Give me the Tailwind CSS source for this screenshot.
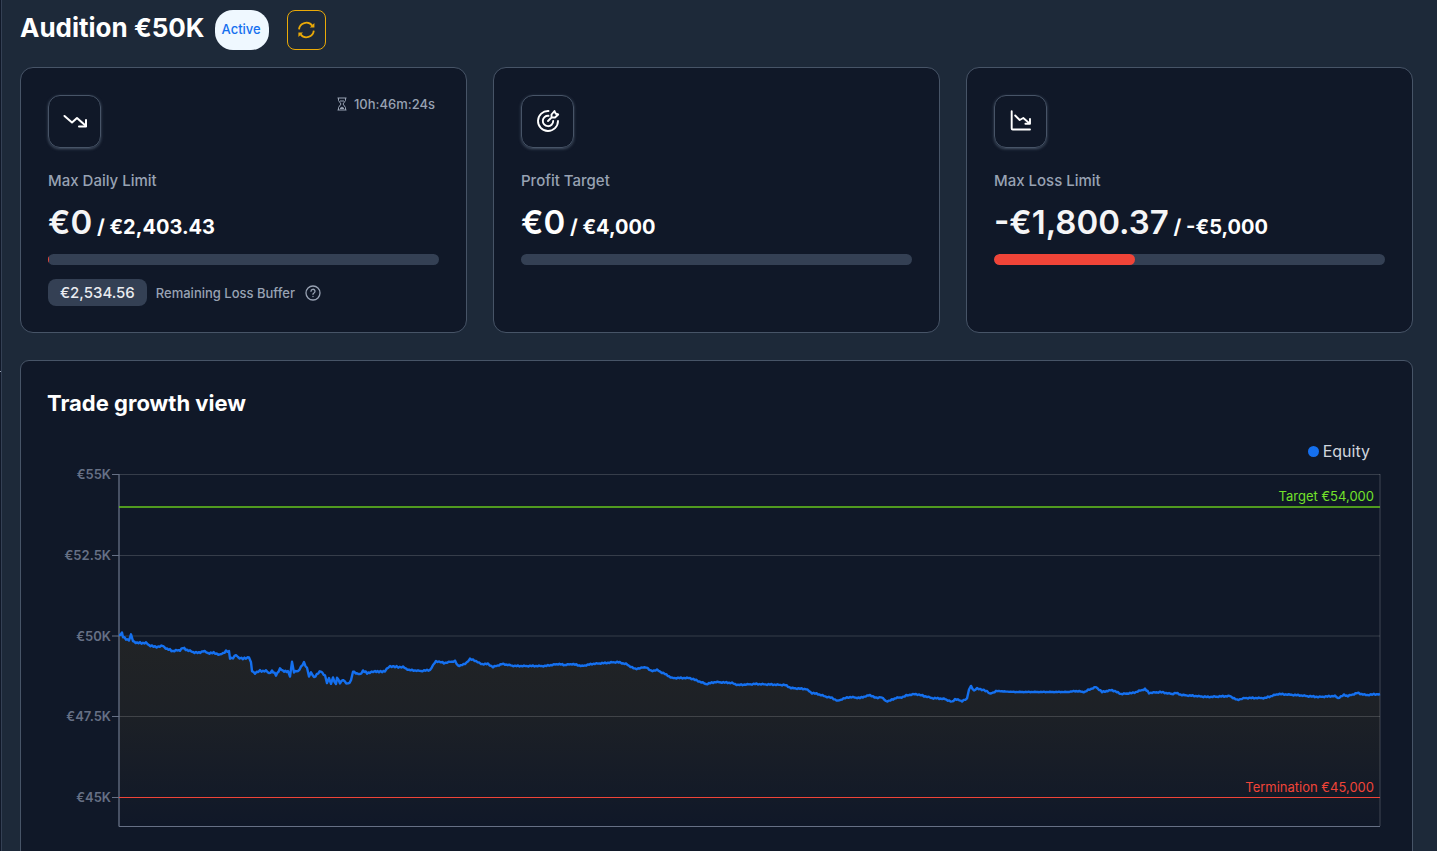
<!DOCTYPE html>
<html lang="en">
<head>
  <meta charset="UTF-8" />
  <meta name="viewport" content="width=device-width, initial-scale=1" />
  <title>Audition €50K</title>
  <script src="https://cdn.jsdelivr.net/npm/@tailwindcss/browser@4"></script>
</head>
<body class="h-screen overflow-hidden bg-[#1d2939] font-['Inter',sans-serif] text-white">
  <div class="flex min-h-screen">

    <!-- Collapsed sidebar edge -->
    <aside class="w-[2px] shrink-0 border-r border-[#344054] bg-[#101828] pt-[371px]">
      <div class="h-px bg-[#98a2b3]"></div>
    </aside>

    <main class="min-w-0 grow pt-[10px] pr-6 pl-[18px]">

      <!-- Header -->
      <header class="mb-[17px] flex items-start">
        <h1 class="text-[26px] leading-9 font-bold">Audition €50K</h1>
        <span class="ml-[10px] flex h-10 items-center rounded-[18px] bg-[#eff8ff] pr-2 pl-[7px] text-[13px] font-medium text-[#1570ef]">Active</span>
        <button type="button" aria-label="Refresh" class="ml-[18px] flex h-10 w-[39px] items-center justify-center rounded-lg border border-[#eaaa08] text-[#eaaa08]">
          <svg class="size-5" viewBox="0 0 20 20" fill="none" stroke="currentColor" stroke-width="1.8">
            <path d="M3 9.400a7.400 7.400 0 0 1 13.200-3.800M17.800 10.600a7.400 7.400 0 0 1-13.200 3.800" />
            <path d="M18.400 3v4.600h-4.600zM2.400 17v-4.600h4.600z" fill="currentColor" stroke="none" />
          </svg>
        </button>
      </header>

      <!-- Limits -->
      <div class="mb-[27px] grid grid-cols-3 gap-[26px]">

        <section class="rounded-[13px] border border-[#475467] bg-[#101828] px-[27px] pt-[27px] pb-[26px]">
          <div class="flex items-start justify-between">
            <div class="flex size-[53px] items-center justify-center rounded-xl border border-[#475467] pb-px shadow-[0_1px_3px_#475467]">
              <svg class="size-6" viewBox="0 0 24 24" fill="none" stroke="currentColor" stroke-width="2" stroke-linecap="round" stroke-linejoin="round">
                <path d="m23 17-9-8-5 4.500L1.500 7" />
                <path d="M16 17.500h7V11" />
              </svg>
            </div>
            <div class="flex items-center gap-[6px] pr-1 text-[13px] leading-[18px] font-medium text-[#98a2b3]">
              <svg class="h-[14px] w-3" viewBox="0 0 12 14" fill="none" stroke="currentColor" stroke-width="1">
                <path d="M1.500 1h9M1.500 13h9M2.500 1v2.500L5 7l-2.500 3.500V13M9.500 1v2.500L7 7l2.500 3.500V13M4 4h4M4 11.500 6 10l2 1.500z" />
              </svg>
              10h:46m:24s
            </div>
          </div>
          <h2 class="mt-[21px] text-[15px] leading-6 font-medium text-[#98a2b3]">Max Daily Limit</h2>
          <p class="mt-[9px] text-[33px] leading-10 font-semibold text-[#f5f5f6]">€0<span class="text-xl font-bold text-white"> / €2,403.43</span></p>
          <div class="mt-3 h-[11px] overflow-hidden rounded-full bg-[#344054]">
            <div class="h-full bg-[#f04438]" style="width: 0.1%"></div>
          </div>
          <div class="mt-[14px] flex items-center">
            <span class="rounded-lg bg-[#344054] px-3 text-[15px] leading-[27px] font-medium text-[#eaecf0]">€2,534.56</span>
            <span class="ml-[9px] text-[13px] leading-6 font-medium text-[#98a2b3]">Remaining Loss Buffer</span>
            <svg class="ml-[10px] size-4 text-[#98a2b3]" viewBox="0 0 16 16" fill="none" stroke="currentColor" stroke-width="1.300" stroke-linecap="round">
              <circle cx="8" cy="8" r="7" />
              <path d="M6 6.300a2 2 0 1 1 3 1.700c-.6.350-1 .7-1 1.300M8 11.500v.1" />
            </svg>
          </div>
        </section>

        <section class="rounded-[13px] border border-[#475467] bg-[#101828] px-[27px] pt-[27px] pb-[26px]">
          <div class="flex size-[53px] items-center justify-center rounded-xl border border-[#475467] pb-px shadow-[0_1px_3px_#475467]">
            <svg class="size-6" viewBox="0 0 24 24" fill="none" stroke="currentColor" stroke-width="1.900" stroke-linecap="round" stroke-linejoin="round">
              <path d="M12.500 2A10 10 0 1 0 22 12" />
              <path d="M12.500 6.800A5.200 5.200 0 1 0 17.200 12" />
              <path d="m12 12 3.500-3.500M15.500 8.500v-3L18.500 2l1 2.500 2.700 1L19 8.500z" />
            </svg>
          </div>
          <h2 class="mt-[21px] text-[15px] leading-6 font-medium text-[#98a2b3]">Profit Target</h2>
          <p class="mt-[9px] text-[33px] leading-10 font-semibold">€0<span class="text-xl font-bold"> / €4,000</span></p>
          <div class="mt-3 h-[11px] rounded-full bg-[#344054]"></div>
        </section>

        <section class="rounded-[13px] border border-[#475467] bg-[#101828] px-[27px] pt-[27px] pb-[26px]">
          <div class="flex size-[53px] items-center justify-center rounded-xl border border-[#475467] pb-px shadow-[0_1px_3px_#475467]">
            <svg class="size-6" viewBox="0 0 24 24" fill="none" stroke="currentColor" stroke-width="1.900" stroke-linecap="round" stroke-linejoin="round">
              <path d="M2.700 2.300v17.200q0 1 1 1H21" />
              <path d="m6.200 6.500 4.500 4.500 3.600-2 6.200 5.400M21 10v4.700h-4.600" />
            </svg>
          </div>
          <h2 class="mt-[21px] text-[15px] leading-6 font-medium text-[#98a2b3]">Max Loss Limit</h2>
          <p class="mt-[9px] text-[33px] leading-10 font-semibold text-[#f5f5f6]">-€1,800.37<span class="text-xl font-bold text-white"> / -€5,000</span></p>
          <div class="mt-3 h-[11px] overflow-hidden rounded-full bg-[#344054]">
            <div class="h-full rounded-full bg-[#f04438]" style="width: 36%"></div>
          </div>
        </section>
      </div>

      <!-- Equity chart -->
      <section class="rounded-[9px] border border-[#475467] bg-[#101828] p-[26px]">
        <h2 class="text-[22px] leading-8 font-bold">Trade growth view</h2>
        <div class="mt-5 mr-4 flex items-center justify-end gap-1 text-base leading-6 text-[#d0d5dd]">
          <span class="size-[11px] rounded-full bg-[#1570ef]"></span>
          Equity
        </div>
        <svg class="h-auto w-full" viewBox="47 463 1339 380" fill="none">
          <defs>
            <linearGradient id="fade" gradientUnits="userSpaceOnUse" x1="0" y1="633" x2="0" y2="826">
              <stop offset="0" stop-color="#eaaa08" stop-opacity="0.080" />
              <stop offset="0.400" stop-color="#eaaa08" stop-opacity="0.060" />
              <stop offset="0.800" stop-color="#eaaa08" stop-opacity="0.020" />
              <stop offset="1" stop-color="#eaaa08" stop-opacity="0" />
            </linearGradient>
          </defs>
          <polygon id="area" fill="url(#fade)" />
          <path d="M119 474.500h1261M119 555.500h1261M119 636h1261M119 716.500h1261" stroke="#fff" stroke-opacity="0.160" />
          <path d="M1380 474v352" stroke="#fff" stroke-opacity="0.200" />
          <path d="M112 474.500h7M112 555.500h7M112 636h7M112 716.500h7M112 797.500h7" stroke="#667085" />
          <path d="M119 474v352.500" stroke="#667085" stroke-width="1.300" />
          <path d="M119 826.500h1261" stroke="#667085" />
          <path d="M119 507h1261" stroke="#66c61c" stroke-width="1.300" />
          <path d="M119 797.500h1261" stroke="#f04438" />
          <polyline id="equity" stroke="#1570ef" stroke-width="2.400" stroke-linejoin="round" />
          <g fill="#667085" font-size="13" font-weight="600" text-anchor="end">
            <text x="111" y="479">€55K</text>
            <text x="111" y="560">€52.5K</text>
            <text x="111" y="641">€50K</text>
            <text x="111" y="721">€47.5K</text>
            <text x="111" y="802">€45K</text>
          </g>
          <g font-size="13" text-anchor="end">
            <text x="1374" y="501" fill="#73e22a">Target €54,000</text>
            <text x="1374" y="792" fill="#f04438">Termination €45,000</text>
          </g>
        </svg>
      </section>
    </main>
  </div>

  <script>
    // equity series in chart coordinates
    const points = [
      [119, 635], [122, 633], [123, 637], [126, 639], [129, 640], [131, 635], [133, 641], [137, 643], [146, 643], [149, 645],
      [155, 647], [163, 646], [167, 649], [173, 651], [180, 650], [183, 648], [187, 650], [193, 652], [199, 653], [203, 651],
      [208, 653], [215, 653], [220, 655], [226, 651], [229, 652], [230, 658], [233, 658], [236, 655], [238, 657], [243, 659],
      [249, 657], [251, 663], [252, 671], [255, 673], [260, 671], [266, 671], [269, 673], [272, 671], [276, 675], [280, 669],
      [284, 671], [288, 672], [290, 676], [292, 662], [294, 672], [298, 671], [304, 663], [307, 668], [309, 676], [311, 673],
      [314, 677], [321, 671], [325, 676], [327, 683], [329, 678], [331, 683], [333, 678], [336, 685], [337, 677], [340, 683],
      [343, 680], [348, 684], [351, 681], [353, 671], [357, 674], [360, 674], [363, 671], [367, 673], [373, 672], [375, 671],
      [379, 672], [385, 671], [390, 666], [395, 667], [403, 667], [409, 670], [421, 671], [430, 670], [436, 661], [444, 663],
      [455, 661], [458, 666], [465, 664], [470, 659], [476, 661], [481, 664], [488, 664], [493, 667], [502, 664], [515, 666],
      [530, 666], [545, 666], [558, 664], [565, 665], [572, 664], [582, 666], [592, 664], [605, 663], [617, 662], [626, 664],
      [635, 669], [646, 667], [651, 671], [657, 670], [665, 674], [672, 678], [690, 678], [698, 681], [706, 684], [716, 682],
      [732, 683], [738, 685], [755, 684], [785, 685], [791, 688], [806, 689], [812, 693], [818, 694], [824, 696], [832, 698],
      [838, 701], [842, 699], [850, 697], [860, 698], [870, 695], [876, 698], [881, 697], [886, 701], [889, 701], [896, 698],
      [903, 697], [908, 695], [916, 694], [924, 696], [932, 698], [945, 699], [952, 702], [955, 699], [962, 701], [967, 699],
      [969, 689], [971, 686], [974, 691], [977, 688], [982, 690], [987, 691], [990, 694], [996, 691], [1015, 692], [1068, 692],
      [1075, 691], [1085, 692], [1088, 690], [1096, 687], [1102, 692], [1112, 690], [1121, 694], [1133, 693], [1145, 689], [1149, 693],
      [1160, 692], [1172, 694], [1176, 693], [1182, 695], [1208, 697], [1230, 696], [1237, 700], [1245, 698], [1265, 698], [1278, 694],
      [1295, 695], [1318, 697], [1335, 696], [1338, 698], [1344, 695], [1348, 696], [1357, 693], [1366, 695], [1380, 694]
    ];

    // small tick noise between the recorded points
    const noise = [0, 0.8, -0.6, 0.3, -0.9, 0.7, -0.2, 0.5, -0.7, 0.1];
    const line = [];
    let n = 0;
    for (let i = 0; i < points.length - 1; i++) {
      const [x1, y1] = points[i];
      const [x2, y2] = points[i + 1];
      const steps = Math.max(1, Math.round((x2 - x1) / 1.5));
      for (let s = 0; s < steps; s++) {
        const t = s / steps;
        const flat = x1 > 990 && x1 < 1070 ? 0.3 : x1 > 400 ? 0.7 : 1;
        const x = x1 + (x2 - x1) * t;
        const y = y1 + (y2 - y1) * t + noise[n++ % 10] * flat;
        line.push(x.toFixed(1) + ',' + y.toFixed(1));
      }
    }
    line.push('1380,694');
    document.getElementById('equity').setAttribute('points', line.join(' '));
    document.getElementById('area').setAttribute('points', '119,826 ' + line.join(' ') + ' 1380,826');
  </script>
</body>
</html>
